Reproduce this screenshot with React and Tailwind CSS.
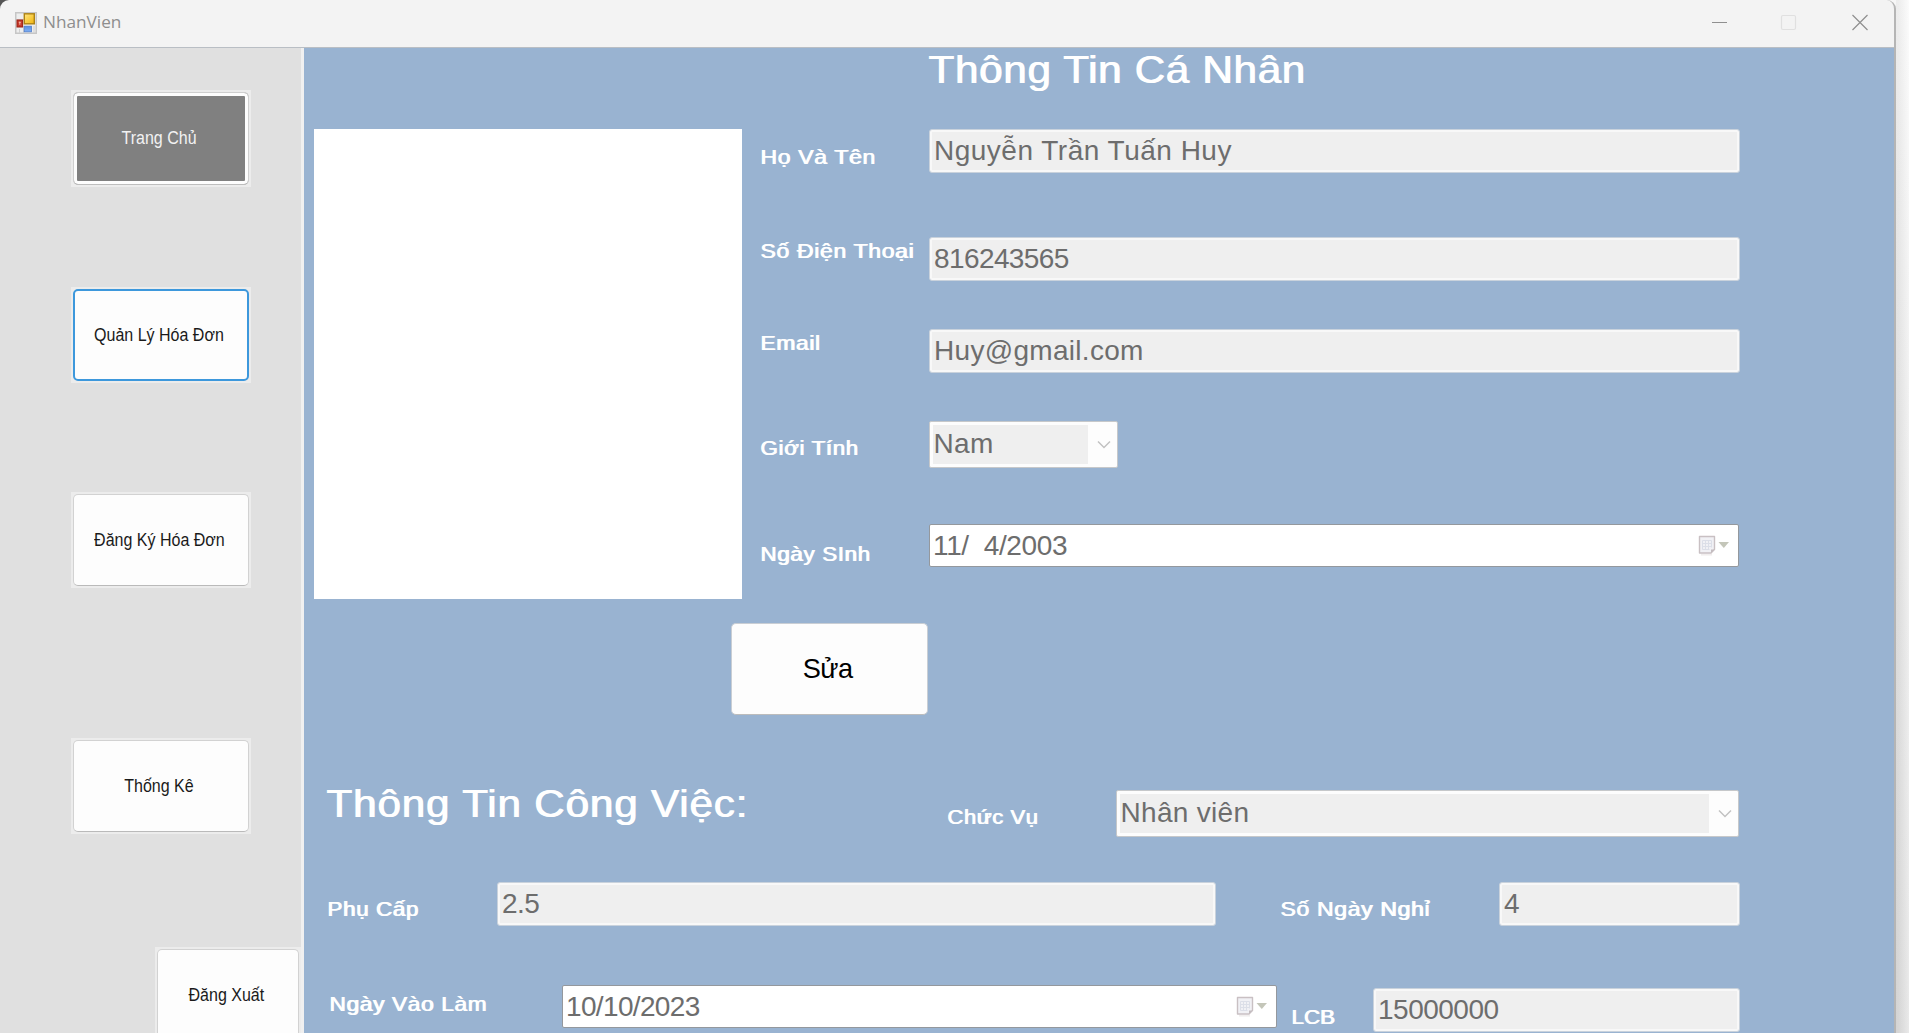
const sans = "font-['Liberation_Sans',Arial,sans-serif]";

function AppIcon() {
  return (
    <svg width="22" height="22" viewBox="0 0 22 22">
      <defs>
        <linearGradient id="yellow" x1="0" y1="0" x2="1" y2="1">
          <stop offset="0" stopColor="#ffe680" />
          <stop offset="1" stopColor="#f2b50c" />
        </linearGradient>
        <linearGradient id="blue" x1="0" y1="0" x2="0" y2="1">
          <stop offset="0" stopColor="#5a8ee0" />
          <stop offset="1" stopColor="#7fb0f5" />
        </linearGradient>
      </defs>
      <rect x="0.75" y="0.75" width="20.5" height="20.5" fill="#eeeeee" stroke="#c6c6c6" strokeWidth="1.5" />
      <path d="M1 7.5h8M8.5 14v7M4.5 17v4M19 14v7" stroke="#d0d0d0" strokeWidth="1" />
      <rect x="9.3" y="1.8" width="10" height="10" fill="url(#yellow)" stroke="#ad8213" strokeWidth="1.4" />
      <rect x="2" y="8" width="5.6" height="7" fill="#c5392b" stroke="#9b2015" strokeWidth="1" />
      <path d="M4.8 9.6v3.2M3.8 10.4h2" stroke="#f3b3a6" strokeWidth="1" />
      <rect x="9.2" y="14.2" width="7.2" height="5.6" fill="url(#blue)" stroke="#4f7dcb" strokeWidth="0.8" />
    </svg>
  );
}

function CalendarIcon() {
  return (
    <svg width="32" height="22" viewBox="0 0 32 22">
      <path d="M3 19.6h11" stroke="#f1eeee" strokeWidth="2" />
      <path d="M1.5 1.5h15v13l-3.5 3.5H1.5z" fill="#f1f1f5" stroke="#c9c0c3" strokeWidth="1.4" strokeLinejoin="round" />
      <path d="M16.5 14.5H13V18z" fill="#c3bcc0" />
      <path d="M4.5 5.5h9M4.5 8.5h9M4.5 11.5h9M4.5 14.5h7M4.5 5.5v9M7.5 5.5v9M10.5 5.5v9M13.5 5.5v7" stroke="#dcdfe8" strokeWidth="1" />
      <path d="M20.5 7h10.5l-5.2 6z" fill="#c4c6b9" />
    </svg>
  );
}

function Heading({ className, children }) {
  return (
    <h2 className={`w-max origin-left scale-x-[1.07] whitespace-nowrap text-[39.5px] leading-[44px] text-white [text-shadow:1px_0_0_#fff] ${className}`}>
      {children}
    </h2>
  );
}

function Label({ className, stretch = "scale-x-[1.09]", children }) {
  return (
    <span className={`shrink-0 whitespace-nowrap text-[20.5px] leading-[24px] text-white ${className}`}>
      <span className={`ml-[1px] inline-block origin-left tracking-[0.6px] [text-shadow:1px_0_0_#fff] ${stretch}`}>{children}</span>
    </span>
  );
}

function TextField({ className, children }) {
  return (
    <div className={`flex h-[44px] shrink-0 items-center rounded-[3px] border border-[#c9d2dc] bg-[#efefef] pl-[4px] text-[28px] leading-none text-[#6d6d6d] shadow-[inset_0_0_0_2px_#f8f8f8] ${className}`}>
      {children}
    </div>
  );
}

function Combo({ className, children }) {
  return (
    <div className={`flex h-[47px] shrink-0 rounded-[2px] border border-[#c6c8ca] bg-[#fdfdfd] p-[3px] text-[28px] leading-none text-[#6d6d6d] ${className}`}>
      <div className="flex grow items-center bg-[#efefef] pb-[2px] pl-[0.5px] tracking-[0.3px]">{children}</div>
      <div className="flex w-[26px] items-center justify-center pl-[6px]">
        <svg width="14" height="9" viewBox="0 0 14 9">
          <path d="M1 1.5l6 6 6-6" fill="none" stroke="#c2c2c2" strokeWidth="1.5" />
        </svg>
      </div>
    </div>
  );
}

function DateField({ className, children }) {
  return (
    <div className={`flex h-[43px] shrink-0 items-center justify-between rounded-[2px] border-[1.5px] border-[#94989d] bg-white pl-[3px] pr-[8px] text-[28px] leading-none text-[#6d6d6d] ${className}`}>
      <span className="whitespace-pre">{children}</span>
      <CalendarIcon />
    </div>
  );
}

function NavButton({ className, face, children }) {
  return (
    <div className={`w-[180px] shrink-0 bg-[#ececec] p-[2px] ${className}`}>
      <button className={`flex size-full items-center justify-center rounded-[5px] border pr-[4px] text-[17.5px] ${face}`}>
        <span className="scale-x-[0.915] whitespace-nowrap">{children}</span>
      </button>
    </div>
  );
}

const plain = "border-[#d2d2d2] border-b-[#bababa] bg-[#fdfdfd] text-[#1a1a1a]";

export default function App() {
  return (
    <div className={`flex h-[1033px] w-[1909px] overflow-hidden bg-linear-to-r from-[#555] from-50% to-[#f6f6f6] to-50% ${sans}`}>
      <div className="flex w-[1896px] shrink-0 flex-col overflow-hidden rounded-t-[9px] border-r-2 border-[#b5b5b5] bg-[#f3f3f3]">
        <header className="flex h-[48px] shrink-0 items-center border-b border-[#b9bec4] pl-[15px]">
          <div className="pb-[2px]"><AppIcon /></div>
          <span className="grow pb-[3px] pl-[6px] font-['Open_Sans',sans-serif] text-[17.2px] leading-6 text-[#8e8e8e]">NhanVien</span>
          <svg width="160" height="18" viewBox="0 0 160 18" className="mr-[25px] mb-[4px]">
            <path d="M3 9.5h15" stroke="#8f8f8f" strokeWidth="1" />
            <rect x="72.5" y="2.5" width="14" height="14" rx="1.5" fill="none" stroke="#e0e0e0" strokeWidth="1.2" />
            <path d="M143.500 2l15 15M158.500 2l-15 15" stroke="#8f8f8f" strokeWidth="1.2" />
          </svg>
        </header>

        <div className="flex min-h-0 grow">
          <aside className="flex w-[304px] shrink-0 flex-col overflow-hidden border-r-[3px] border-[#f0f0f0] bg-[#e0e0e0] pt-[42px]">
            <NavButton className="ml-[71px] h-[97px]" face="border-[#cfcfcf] border-b-[#bdbdbd] bg-[#808080] text-[#f2f2f2] shadow-[inset_0_0_0_3px_#fdfdfd]">
              Trang Chủ
            </NavButton>
            <NavButton className="mt-[100px] ml-[71px] h-[96px]" face="border-2! border-[#3d98dc] bg-[#fdfdfd] text-[#1a1a1a]">
              Quản Lý Hóa Đơn
            </NavButton>
            <NavButton className="mt-[109px] ml-[71px] h-[96px]" face={plain}>Đăng Ký Hóa Đơn</NavButton>
            <NavButton className="mt-[150px] ml-[71px] h-[96px]" face={plain}>Thống Kê</NavButton>
            <NavButton className="mt-[113px] ml-[155px] h-[96px] w-[146px]!" face={plain}>Đăng Xuất</NavButton>
          </aside>

          <main className="flex min-w-0 grow flex-col overflow-hidden bg-[#99b3d1]">
            <Heading className="mt-[-1px] ml-[624px] tracking-[0.6px]">Thông Tin Cá Nhân</Heading>

            <section className="mt-[38px] flex pl-[10px]">
              <div className="h-[470px] w-[428px] shrink-0 bg-white" />
              <div className="flex flex-col pl-[17px]">
                <div className="flex h-[44px]">
                  <Label className="mt-[16px] w-[170px]" stretch="scale-x-[1.12]">Họ Và Tên</Label>
                  <TextField className="w-[811px] tracking-[0.5px]">Nguyễn Trần Tuấn Huy</TextField>
                </div>
                <div className="mt-[64px] flex h-[44px]">
                  <Label className="mt-[2px] w-[170px]" stretch="scale-x-[1.12]">Số Điện Thoại</Label>
                  <TextField className="w-[811px] tracking-[-0.6px]">816243565</TextField>
                </div>
                <div className="mt-[48px] flex h-[44px]">
                  <Label className="mt-[2px] w-[170px]" stretch="scale-x-[1.11]">Email</Label>
                  <TextField className="w-[811px] tracking-[0.3px]">Huy@gmail.com</TextField>
                </div>
                <div className="mt-[48px] flex h-[47px]">
                  <Label className="mt-[15px] w-[170px]">Giới Tính</Label>
                  <Combo className="w-[189px]">Nam</Combo>
                </div>
                <div className="mt-[56px] flex h-[43px]">
                  <Label className="mt-[18px] w-[170px]">Ngày SInh</Label>
                  <DateField className="w-[810px] tracking-[-0.35px]">11/  4/2003</DateField>
                </div>
              </div>
            </section>

            <button className="mt-[24px] ml-[427px] flex h-[92px] w-[197px] shrink-0 items-center justify-center rounded-[5px] border border-[#c9ced4] border-b-[#bcbcbc] bg-[#fdfdfd] pr-[3px] text-[28px] leading-none tracking-[-0.6px] text-black">
              <span className="scale-x-[0.97]">Sửa</span>
            </button>

            <section className="mt-[65px] flex h-[58px] shrink-0 pl-[22px]">
              <div className="w-[620px] shrink-0 pt-px">
                <Heading className="tracking-[0.75px]">Thông Tin Công Việc:</Heading>
              </div>
              <Label className="mt-[25px] w-[170px]" stretch="scale-x-[1.07]">Chức Vụ</Label>
              <Combo className="mt-[10px] w-[623px]">Nhân viên</Combo>
            </section>

            <section className="mt-[44px] flex h-[44px] shrink-0 pl-[22px]">
              <Label className="mt-[15px] w-[171px]">Phụ Cấp</Label>
              <TextField className="w-[719px] tracking-[-0.5px]">2.5</TextField>
              <Label className="mt-[15px] ml-[63px] w-[220px]" stretch="scale-x-[1.12]">Số Ngày Nghỉ</Label>
              <TextField className="w-[241px]">4</TextField>
            </section>

            <section className="mt-[59px] flex h-[47px] shrink-0 pl-[24px]">
              <Label className="mt-[7px] w-[234px]" stretch="scale-x-[1.105]">Ngày Vào Làm</Label>
              <DateField className="w-[715px] tracking-[-0.65px]">10/10/2023</DateField>
              <Label className="mt-[20px] ml-[13px] w-[83px]">
                <span className="tracking-[0px]">LCB</span>
              </Label>
              <TextField className="mt-[3px] w-[367px] tracking-[-0.5px]">15000000</TextField>
            </section>
          </main>
        </div>
      </div>
      <div className="grow bg-white">
        <div className="h-full bg-linear-to-b from-[#fafafa] via-[#ececec] via-40% to-[#e0e0e0]">
          <div className="h-full bg-linear-to-r from-black/5 to-white/30" />
        </div>
      </div>
    </div>
  );
}
